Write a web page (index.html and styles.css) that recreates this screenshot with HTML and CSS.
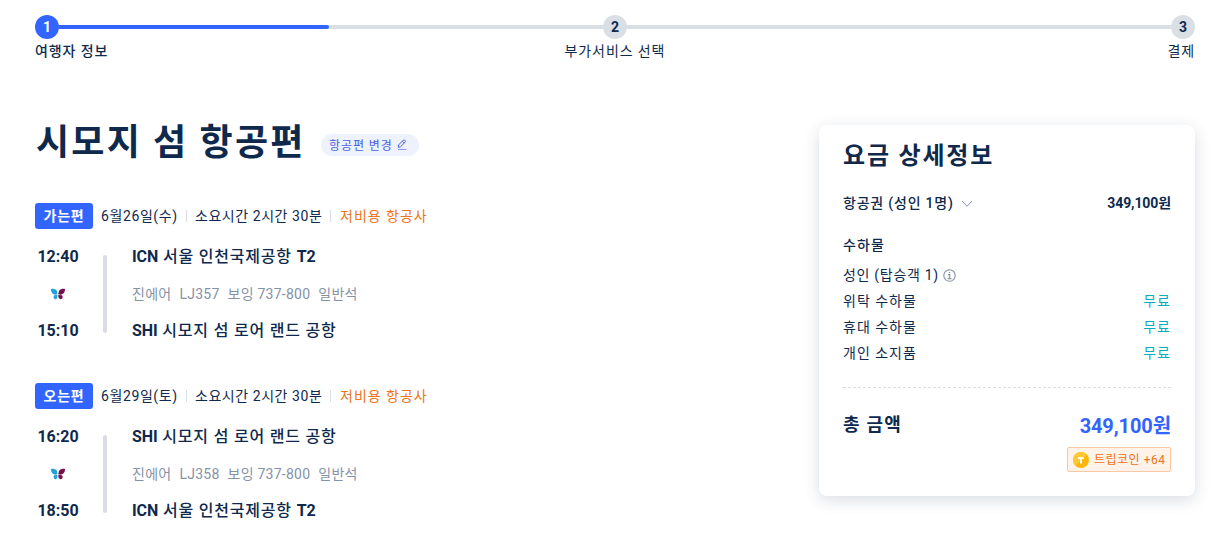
FILE: index.html
```
<!DOCTYPE html>
<html lang="ko">
  <head>
    <meta charset="UTF-8" />
    <meta name="viewport" content="width=device-width, initial-scale=1.0" />
    <title>시모지 섬 항공편</title>
    <link rel="stylesheet" href="styles.css">
  </head>
  <body>
    <svg class="sprite" width="0" height="0">
      <symbol id="butterfly" viewBox="0 0 14 12">
        <path d="M0 1C2.2 0.2 5.4 0.6 6.1 3.6L6.4 6.3C2.6 7.6 -0.2 5.2 0 1Z" fill="#1ba5dc" />
        <path d="M6.4 7C6.6 9.4 6 11.2 4.5 11.2C2.4 11.2 2.2 8.4 3.2 7.2Z" fill="#1ba5dc" />
        <path d="M14 1C11.8 0.2 8.6 0.6 7.9 3.6L7.2 6.3C11.4 7.6 14.2 5.2 14 1Z" fill="#75104f" />
        <path d="M7.3 7C7.1 9.4 8.1 11.3 9.8 11.2C11.9 11.1 12 8.4 11 7.2Z" fill="#75104f" />
      </symbol>
    </svg>

    <div class="steps">
      <div class="step-track">
        <span class="step-num active">1</span>
        <div class="step-line"><div class="step-fill"></div></div>
        <span class="step-num">2</span>
        <div class="step-line"></div>
        <span class="step-num">3</span>
      </div>
      <div class="step-labels">
        <span class="step-label current">여행자 정보</span>
        <span class="step-label middle">부가서비스 선택</span>
        <span class="step-label last">결제</span>
      </div>
    </div>

    <div class="content">
      <div class="flights">
        <div class="heading">
          <h1 class="title">시모지 섬 항공편</h1>
          <button class="change-btn">
            <span>항공편 변경</span>
            <svg width="10" height="11" viewBox="0 0 10 11" fill="none" stroke="#4a5fe0" stroke-width="1">
              <path d="M1.2 8.3L1.6 5.9L6.4 1.1Q7 .6 7.6 1.1L8.3 1.8Q8.9 2.4 8.3 3L3.6 7.7ZM5.4 2.2L7.3 4.1" />
              <path d="M1 10.5H9.5" stroke-opacity="0.6" />
            </svg>
          </button>
        </div>

        <div class="segment">
          <div class="segment-head">
            <span class="badge">가는편</span>
            <span class="date">6월26일(수)</span>
            <span class="divider"></span>
            <span class="duration">소요시간 2시간 30분</span>
            <span class="divider"></span>
            <span class="lowcost">저비용 항공사</span>
          </div>
          <div class="segment-body">
            <div class="times">
              <span>12:40</span>
              <svg class="airline" width="14" height="12"><use href="#butterfly" /></svg>
              <span>15:10</span>
            </div>
            <div class="bar"></div>
            <div class="places">
              <span class="place"><b>ICN</b> 서울 인천국제공항 <b>T2</b></span>
              <div class="detail">
                <span>진에어</span><span>LJ357</span><span>보잉 737-800</span><span>일반석</span>
              </div>
              <span class="place"><b>SHI</b> 시모지 섬 로어 랜드 공항</span>
            </div>
          </div>
        </div>

        <div class="segment">
          <div class="segment-head">
            <span class="badge">오는편</span>
            <span class="date">6월29일(토)</span>
            <span class="divider"></span>
            <span class="duration">소요시간 2시간 30분</span>
            <span class="divider"></span>
            <span class="lowcost">저비용 항공사</span>
          </div>
          <div class="segment-body">
            <div class="times">
              <span>16:20</span>
              <svg class="airline" width="14" height="12"><use href="#butterfly" /></svg>
              <span>18:50</span>
            </div>
            <div class="bar"></div>
            <div class="places">
              <span class="place"><b>SHI</b> 시모지 섬 로어 랜드 공항</span>
              <div class="detail">
                <span>진에어</span><span>LJ358</span><span>보잉 737-800</span><span>일반석</span>
              </div>
              <span class="place"><b>ICN</b> 서울 인천국제공항 <b>T2</b></span>
            </div>
          </div>
        </div>
      </div>

      <div class="price-card">
        <h2 class="card-title">요금 상세정보</h2>
        <div class="row fare">
          <span class="fare-name">항공권 (성인 1명)
            <svg width="12" height="8" viewBox="0 0 12 8" fill="none" stroke="#8592a6"><path d="M1 1L6 6.3L11 1" /></svg>
          </span>
          <span class="fare-price">349,100원</span>
        </div>
        <div class="bag-title">수하물</div>
        <div class="passenger"><span>성인 (탑승객 1)</span>
          <svg width="13" height="13" viewBox="0 0 13 13" fill="none" stroke="#8592a6">
            <circle cx="6.5" cy="6.5" r="5.7" stroke-width="1.1" />
            <path d="M5 5.6H6.7V9.6M4.8 9.6H8.4M5.9 3.5H7.2" stroke-width="1.1" />
          </svg>
        </div>
        <div class="row bag"><span>위탁 수하물</span><span class="free">무료</span></div>
        <div class="row bag"><span>휴대 수하물</span><span class="free">무료</span></div>
        <div class="row bag"><span>개인 소지품</span><span class="free">무료</span></div>
        <div class="dashes"></div>
        <div class="row total">
          <span class="total-name">총 금액</span>
          <span class="total-price">349,100원</span>
        </div>
        <div class="coin">
          <svg width="16" height="16" viewBox="0 0 16 16">
            <circle cx="8" cy="8" r="8" fill="#ffb60a" />
            <path d="M2.3 13.7A8 8 0 0 1 13.7 2.3Z" fill="#ffc933" />
            <path d="M5 5.2H11V7H9V11.5H7V7H5Z" fill="#fff" />
          </svg>
          <span>트립코인 +64</span>
        </div>
      </div>
    </div>
  </body>
</html>
```

FILE: styles.css
```
* {
  box-sizing: border-box;
}

body {
  margin: 0;
  padding: 15px 22px 0 35px;
  height: 559px;
  overflow: hidden;
  background: #fff;
  color: #0f294d;
  font-family: Roboto, "Noto Sans CJK KR", sans-serif;
  font-size: 14px;
  line-height: 20px;
}

.sprite {
  display: block;
}

/* steps */
.step-track {
  display: flex;
  align-items: center;
}

.step-num {
  width: 24px;
  height: 24px;
  border-radius: 50%;
  background: #dadfe6;
  font-size: 14px;
  font-weight: 700;
  line-height: 24px;
  text-align: center;
}

.step-num.active {
  background: #3264ff;
  color: #fff;
}

.step-line {
  flex: 1;
  height: 4px;
  background: #dadfe6;
}

.step-fill {
  width: 270px;
  height: 4px;
  border-radius: 0 2px 2px 0;
  background: #3264ff;
}

.step-labels {
  display: grid;
  grid-template-columns: 1fr 1fr 1fr;
  margin-top: 2px;
  letter-spacing: 0.9px;
}

.step-label.current {
  font-weight: 500;
}

.step-label.middle {
  text-align: center;
}

.step-label.last {
  text-align: right;
}

.content {
  display: flex;
  justify-content: space-between;
  align-items: flex-start;
  margin-top: 64px;
}

/* flights */
.flights {
  width: 500px;
  margin-top: -7px;
}

.heading {
  display: flex;
  align-items: center;
  height: 50px;
}

.title {
  margin: 0;
  padding-left: 1px;
  width: 286px;
  font-size: 36px;
  font-weight: 700;
  line-height: 50px;
  letter-spacing: 2.2px;
  white-space: nowrap;
}

.change-btn {
  display: flex;
  align-items: center;
  gap: 4px;
  height: 22px;
  margin-top: 3px;
  padding: 0 12px 0 8px;
  border: none;
  border-radius: 11px;
  background: #eef2ff;
  color: #4a5fe0;
  font-family: inherit;
  font-size: 12px;
  letter-spacing: 0.9px;
  white-space: nowrap;
}

.segment {
  height: 180px;
}

.heading + .segment {
  margin-top: 35px;
}

.segment-head {
  display: flex;
  align-items: center;
  height: 26px;
  white-space: nowrap;
}

.badge {
  width: 58px;
  height: 26px;
  margin-right: 8px;
  border-radius: 3px;
  background: #3264ff;
  color: #fff;
  font-weight: 700;
  line-height: 26px;
  letter-spacing: 0.8px;
  text-align: center;
}

.date {
  width: 77px;
  letter-spacing: 0.6px;
}

.duration {
  width: 127px;
  letter-spacing: 0.55px;
}

.lowcost {
  padding-left: 1px;
  color: #ec7421;
  letter-spacing: 1px;
}

.divider {
  width: 1px;
  height: 12px;
  margin: 0 8px;
  background: #dadfe6;
}

.segment-body {
  display: flex;
  margin-top: 15px;
}

.times {
  display: flex;
  flex-direction: column;
  align-items: center;
  justify-content: space-between;
  width: 46px;
  height: 98px;
  margin-top: 1px;
  font-size: 16px;
  font-weight: 700;
  line-height: 24px;
}

.bar {
  width: 4px;
  height: 78px;
  margin: 11px 25px 0 22px;
  border-radius: 2px;
  background: #dadce6;
}

.places {
  display: flex;
  flex-direction: column;
  justify-content: space-between;
  height: 98px;
  margin-top: 1px;
  white-space: nowrap;
}

.place {
  font-size: 16px;
  font-weight: 500;
  line-height: 24px;
  letter-spacing: 0.8px;
}

.place b {
  font-weight: 700;
  letter-spacing: -0.1px;
}

.detail {
  display: flex;
  gap: 8px;
  color: #8592a6;
  letter-spacing: 0.25px;
}

/* price card */
.price-card {
  width: 376px;
  height: 371px;
  padding: 16px 24px 0;
  border-radius: 8px;
  background: #fff;
  box-shadow: 0 4px 16px rgba(15, 41, 77, 0.16);
  letter-spacing: 0.7px;
}

.card-title {
  margin: 0;
  font-size: 24px;
  line-height: 30px;
  letter-spacing: 1.8px;
}

.row {
  display: flex;
  align-items: center;
  justify-content: space-between;
}

.fare {
  margin-top: 22px;
}

.fare-name {
  font-weight: 500;
  letter-spacing: 0.8px;
}

.fare-name svg {
  margin-left: 3px;
}

.fare-price {
  font-weight: 700;
  letter-spacing: -0.1px;
}

.bag-title {
  margin-top: 22px;
  font-weight: 500;
  letter-spacing: 1.1px;
}

.passenger {
  display: flex;
  align-items: center;
  gap: 4px;
  margin-top: 10px;
}

.bag {
  height: 26px;
  letter-spacing: 1px;
}

.passenger + .bag {
  margin-top: 3px;
}

.free {
  color: #06aebd;
}

.dashes {
  margin-top: 21px;
  border-top: 1px dashed #dadfe6;
}

.total {
  margin-top: 21px;
  line-height: 30px;
}

.total-name {
  font-size: 18px;
  font-weight: 700;
  letter-spacing: 1.2px;
}

.total-price {
  padding-top: 2px;
  color: #3264ff;
  font-size: 20px;
  font-weight: 700;
  letter-spacing: -0.1px;
}

.coin {
  display: flex;
  align-items: center;
  gap: 5px;
  width: 104px;
  height: 25px;
  margin: 6px 0 0 auto;
  padding-left: 5px;
  border: 1px solid #f8c9a4;
  border-radius: 2px;
  background: #fff2e8;
  color: #ec7421;
  font-size: 12px;
  letter-spacing: 0.5px;
  white-space: nowrap;
}
```
